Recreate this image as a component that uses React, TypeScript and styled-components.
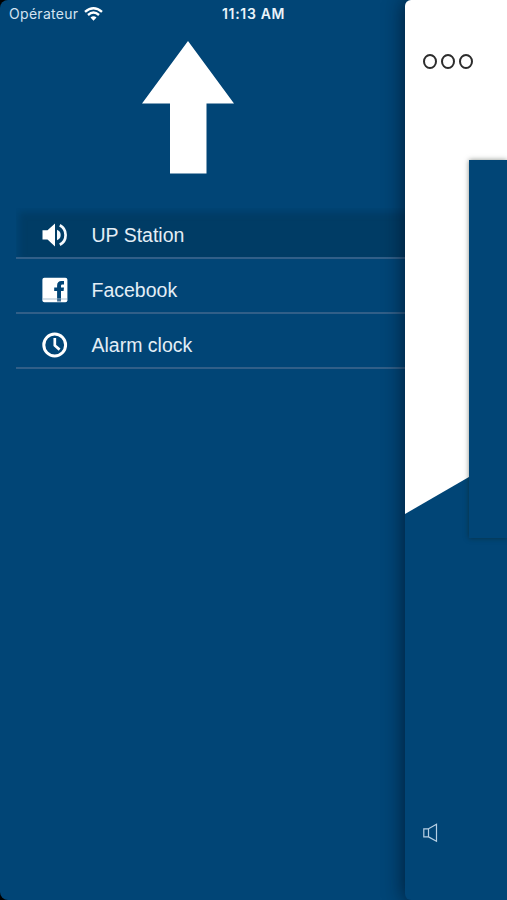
import React from "react";
import styled, { createGlobalStyle } from "styled-components";

const blue = "#014576";

const GlobalStyle = createGlobalStyle`
  * { box-sizing: border-box; }
  body { margin: 0; background: #000; }
`;

const Screen = styled.div`
  display: flex;
  width: 507px;
  height: 900px;
  overflow: hidden;
  background: ${blue};
  border-radius: 8px 0 0 8px;
  font-family: "Liberation Sans", Arial, sans-serif;
`;

const Menu = styled.nav`
  display: flex;
  flex-direction: column;
  width: 405px;
  flex: none;
`;

const StatusBar = styled.header`
  display: grid;
  grid-template-columns: 75px 138px 1fr;
  align-items: center;
  height: 28px;
  padding-left: 9px;
  font-family: Inter, sans-serif;
  line-height: 28px;
`;

const Carrier = styled.span`
  font-size: 14px;
  letter-spacing: 0.3px;
  color: #d3e3f1;
  white-space: nowrap;
`;

const Time = styled.time`
  font-size: 14px;
  font-weight: 600;
  letter-spacing: 0.67px;
  white-space: nowrap;
  color: #e9f3fa;
`;

const Glyph = styled.svg`
  display: block;
  flex: none;
  overflow: visible;
`;

const Logo = styled.div`
  padding: 13px 0 0 142px;
  height: 180px;
`;

const List = styled.ul`
  list-style: none;
  margin: 0;
  padding: 0 0 0 16px;
`;

const Item = styled.li<{ $active?: boolean }>`
  display: flex;
  align-items: center;
  gap: 23.5px;
  height: ${(p) => (p.$active ? 51 : 55)}px;
  padding: ${(p) => (p.$active ? 5 : 8)}px 0 0 26px;
  border-bottom: 2px solid #315f88;
  background: ${(p) => (p.$active ? "#003c65" : "transparent")};
  box-shadow: ${(p) => (p.$active ? "inset 4px 5px 7px -1px #014576" : "none")};
  color: #e4eef6;
  font-size: 19.5px;
  line-height: 24px;
  white-space: nowrap;
`;

const Player = styled.main`
  position: relative;
  z-index: 1;
  display: flex;
  flex-direction: column;
  align-items: flex-start;
  flex: 1;
  height: 900px;
  padding: 54px 0 0 18px;
  border-radius: 6px 0 0 6px;
  background: ${blue};
  box-shadow: 0 0 20px 1px rgba(0, 16, 34, 0.75);
`;

const Backdrop = styled.div`
  position: absolute;
  inset: 0 0 auto 0;
  height: 514px;
  border-radius: 6px 0 0 0;
  background: #fff;
  clip-path: polygon(0 0, 100% 0, 100% 455px, 0 100%);
`;

const MoreButton = styled.button`
  position: relative;
  display: flex;
  gap: 4px;
  height: 16px;
  padding: 0;
  border: 0;
  background: none;
`;

const Ring = styled.i`
  width: 14px;
  height: 15px;
  border: 2px solid #2c2c2c;
  border-radius: 50%;
`;

const Cover = styled.section`
  position: relative;
  align-self: stretch;
  height: 378px;
  margin: 90px 0 0 46px;
  background: ${blue};
  box-shadow: 0 0 5px rgba(20, 28, 16, 0.5);
  clip-path: inset(-8px 0 -8px -8px);
`;

const Volume = styled.div`
  position: relative;
  margin-top: 285px;
`;

const WifiIcon = () => (
  <Glyph width="19" height="14" viewBox="0 0 19 14" fill="none" stroke="#fff" strokeWidth="2.4">
    <path d="M1 4.9Q9.5-2.4 18 4.9M4 8Q9.5 3.2 15 8" />
    <path d="M6.5 10.6Q9.5 8.1 12.5 10.6L9.5 13.7Z" fill="#fff" stroke="none" />
  </Glyph>
);

const SpeakerIcon = () => (
  <Glyph width="26" height="26" viewBox="0 0 26 26" fill="none">
    <path d="M.5 8.3H5.5L13 1.5V24.5L5.5 17.6H.5Z" fill="#fff" />
    <path d="M15 7.8Q18.7 9.3 18.7 13Q18.7 16.7 15 18.2Z" fill="#f4f9fd" />
    <path d="M17.8 3.2Q23.6 6.2 23.6 13Q23.6 19.8 17.8 22.8" stroke="#f4f9fd" strokeWidth="2.7" />
  </Glyph>
);

const FacebookIcon = () => (
  <Glyph width="26" height="26" viewBox="0 0 26 26">
    <rect x=".4" y=".8" width="25" height="24.5" rx="2" fill="#fff" />
    <path d="M15.1 22V13.9H12.2V10.5H15.1V8.6Q15.1 4.1 19.5 4.1H22V7.5H20.3Q19 7.5 19 8.8V10.5H22L21.6 13.9H19V22Z" fill={blue} />
    <path d="M1 22H25" stroke="#a9bfd0" strokeWidth="1" />
    <path d="M15.1 22V24.5H19V22Z" fill="#426f94" />
  </Glyph>
);

const ClockIcon = () => (
  <Glyph width="26" height="26" viewBox="0 0 26 26" fill="none" stroke="#fff">
    <circle cx="12.7" cy="13" r="10.9" strokeWidth="3" />
    <path d="M12.8 6V13.5L17.6 17.6" strokeWidth="2.7" />
  </Glyph>
);

const entries = [
  { label: "UP Station", Icon: SpeakerIcon, active: true },
  { label: "Facebook", Icon: FacebookIcon, active: false },
  { label: "Alarm clock", Icon: ClockIcon, active: false },
];

export default function App() {
  return (
    <>
      <GlobalStyle />
      <Screen>
        <Menu>
          <StatusBar>
            <Carrier>Opérateur</Carrier>
            <WifiIcon />
            <Time>11:13 AM</Time>
          </StatusBar>
          <Logo>
            <Glyph width="92" height="133" viewBox="0 0 92 133">
              <path d="M46 0L92 62.5H64.5V132.5H28V62.5H0Z" fill="#fff" />
            </Glyph>
          </Logo>
          <List>
            {entries.map(({ label, Icon, active }) => (
              <Item key={label} $active={active}>
                <Icon />
                <span>{label}</span>
              </Item>
            ))}
          </List>
        </Menu>
        <Player>
          <Backdrop />
          <MoreButton aria-label="More">
            <Ring />
            <Ring />
            <Ring />
          </MoreButton>
          <Cover />
          <Volume>
            <Glyph width="16" height="20" viewBox="0 0 16 20" fill="none" stroke="#b5cee3" strokeWidth="1.2">
              <path d="M.8 5.8H5.5V13.9H.8ZM5.5 5.8L13.5 1.2V18.3L5.5 13.9" />
            </Glyph>
          </Volume>
        </Player>
      </Screen>
    </>
  );
}
